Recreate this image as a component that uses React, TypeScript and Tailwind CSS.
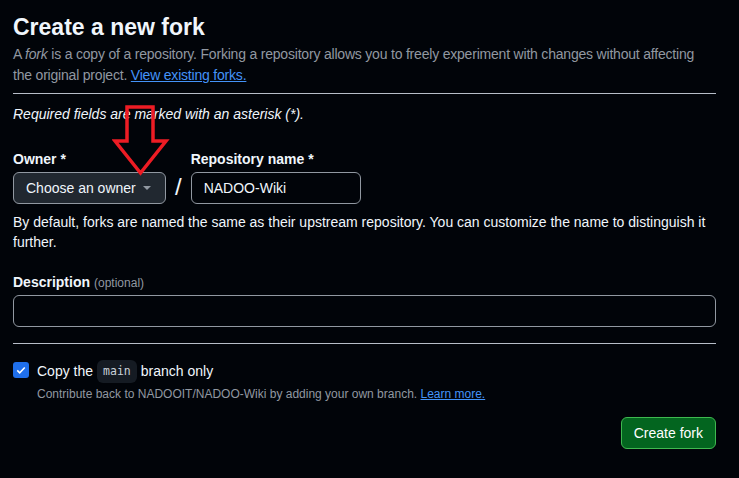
const ForkArrow = () => (
  <svg
    className="absolute left-[112px] top-[104px]"
    width="58"
    height="74"
    viewBox="0 0 58 74"
    fill="none"
  >
    <polygon
      points="15,3 41,3 41,37 54,37 28.5,69 3,37 15,37"
      stroke="#ed1c24"
      strokeWidth="3.5"
      strokeLinejoin="miter"
    />
  </svg>
);

const App = () => {
  return (
    <div className="relative min-h-[478px] w-full bg-[#010409] font-['Liberation_Sans',sans-serif] text-[#f0f6fc]">
      <div className="w-[703px] pl-[13px] pt-[12px] box-content">
        <h1 className="text-[23px] font-bold leading-[30px]">Create a new fork</h1>
        <p className="mt-[2px] text-[14px] leading-[21px] tracking-[-0.2px] text-[#9198a1]">
          A <em>fork</em> is a copy of a repository. Forking a repository allows you to freely experiment with changes without affecting the original project.{" "}
          <a href="#" className="text-[#4493f8] underline">View existing forks.</a>
        </p>
        <div className="mt-[7px] h-px bg-[#b7bdc8]" />

        <p className="mt-[10px] text-[14px] italic leading-[21px]">Required fields are marked with an asterisk (*).</p>

        <div className="mt-[24px] flex items-end gap-[9px]">
          <div className="flex flex-col">
            <label className="mb-[3px] text-[14px] font-bold leading-[20px]">Owner *</label>
            <button className="flex h-[32px] w-[153px] items-center justify-between rounded-[6px] border border-[#9198a1] bg-[#212830] pl-[12px] pr-[14px] text-[14px] text-[#f0f6fc]">
              Choose an owner
              <svg width="8" height="4" viewBox="0 0 8 4"><polygon points="0,0 8,0 4,4" fill="#9198a1" /></svg>
            </button>
          </div>
          <span className="pb-[2px] text-[24px] leading-[30px]">/</span>
          <div className="flex flex-col">
            <label className="mb-[3px] text-[14px] font-bold leading-[20px]">Repository name *</label>
            <input
              readOnly
              value="NADOO-Wiki"
              className="h-[32px] w-[170px] rounded-[6px] border border-[#9198a1] bg-[#010409] px-[12px] text-[14px] text-[#f0f6fc] outline-none"
            />
          </div>
        </div>
        <p className="mt-[8px] text-[14px] leading-[20px]">
          By default, forks are named the same as their upstream repository. You can customize the name to distinguish it further.
        </p>

        <div className="mt-[20px] flex items-baseline gap-[4px]">
          <span className="text-[14px] font-bold leading-[20px]">Description</span>
          <span className="text-[12px] text-[#9198a1]">(optional)</span>
        </div>
        <input
          readOnly
          className="mt-[3px] block h-[32px] w-full rounded-[6px] border border-[#9198a1] bg-[#010409] outline-none"
        />
        <div className="mt-[16px] h-px bg-[#b7bdc8]" />

        <div className="mt-[16px] flex gap-[8px]">
          <div className="mt-[2px] flex h-[16px] w-[16px] items-center justify-center rounded-[3px] bg-[#1f6feb]">
            <svg width="12" height="12" viewBox="0 0 16 16" fill="none">
              <path d="M3 8.5 6.3 11.8 13 4.8" stroke="white" strokeWidth="2" />
            </svg>
          </div>
          <div className="flex flex-col">
            <div className="flex items-center gap-[4px] text-[14px] leading-[21px]">
              Copy the
              <code className="rounded-[6px] bg-[#151b23] px-[6px] py-[1px] font-['DejaVu_Sans_Mono',monospace] text-[11.5px] text-[#c9d1d9]">main</code>
              branch only
            </div>
            <div className="mt-[2px] text-[12px] leading-[18px] text-[#9198a1]">
              Contribute back to NADOOIT/NADOO-Wiki by adding your own branch.{" "}
              <a href="#" className="text-[#4493f8] underline">Learn more.</a>
            </div>
          </div>
        </div>

        <div className="mt-[14px] flex justify-end">
          <button className="h-[32px] rounded-[6px] border border-[#3fb950] bg-[#03651f] px-[12px] text-[14px] font-medium text-white">
            Create fork
          </button>
        </div>
      </div>
      <ForkArrow />
    </div>
  );
};

export default App;
